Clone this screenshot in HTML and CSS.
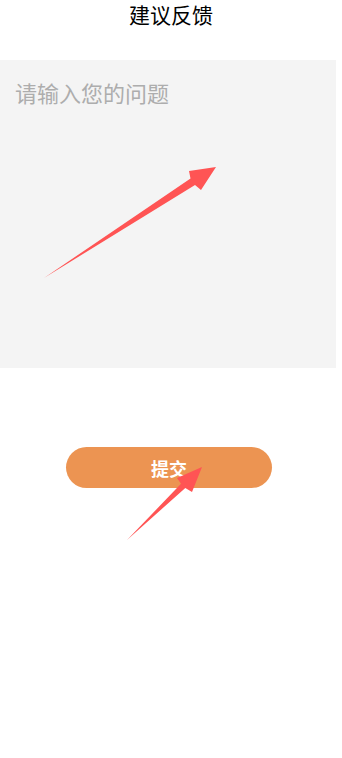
FILE: index.html
```html
<!DOCTYPE html>
<html lang="zh-CN">
<head>
  <meta charset="UTF-8">
  <meta name="viewport" content="width=device-width, initial-scale=1.0">
  <title>建议反馈</title>
  <link rel="stylesheet" href="styles.css">
</head>
<body>
  <div class="page">
    <header class="title-bar">
      <h1>建议反馈</h1>
    </header>

    <div class="feedback-box">
      <textarea class="feedback-input" placeholder="请输入您的问题"></textarea>
    </div>

    <button class="submit-btn">提交</button>

    <!-- annotation arrows drawn over the page -->
    <svg class="arrows" width="342" height="758" viewBox="0 0 342 758">
      <polygon points="44,278 190.5,178.5 189,171 216,167 201,190 195,185" />
      <polygon points="127,540 181,483.8 177,478 202,467 192,492 185.3,488" />
    </svg>
  </div>
</body>
</html>
```

FILE: styles.css
```css
* {
  margin: 0;
  padding: 0;
  box-sizing: border-box;
}

body {
  font-family: "Noto Sans CJK SC", "Noto Sans", sans-serif;
  background-color: #fff;
  color: #111;
}

.page {
  position: relative;
  width: 342px;
  min-height: 758px;
}

.title-bar {
  height: 28px;
  display: flex;
  align-items: center;
  justify-content: center;
}

.title-bar h1 {
  font-size: 21px;
  font-weight: 400;
  line-height: 28px;
  color: #000;
}

.feedback-box {
  margin-top: 32px;
  width: 336px;
  height: 308px;
  background-color: #f4f4f4;
}

.feedback-input {
  width: 100%;
  height: 100%;
  border: none;
  outline: none;
  resize: none;
  background: transparent;
  padding: 20px 15px;
  font-family: inherit;
  font-size: 22px;
  line-height: 24px;
  color: #333;
}

.feedback-input::placeholder {
  color: #adadad;
}

.submit-btn {
  display: block;
  margin: 79px 0 0 66px;
  width: 206px;
  height: 41px;
  border: none;
  border-radius: 21px;
  background-color: #ec9452;
  color: #fff;
  font-family: inherit;
  font-size: 18px;
  font-weight: 700;
  cursor: pointer;
}

.arrows {
  position: absolute;
  top: 0;
  left: 0;
  pointer-events: none;
}

.arrows polygon {
  fill: #ff5454;
}
```
